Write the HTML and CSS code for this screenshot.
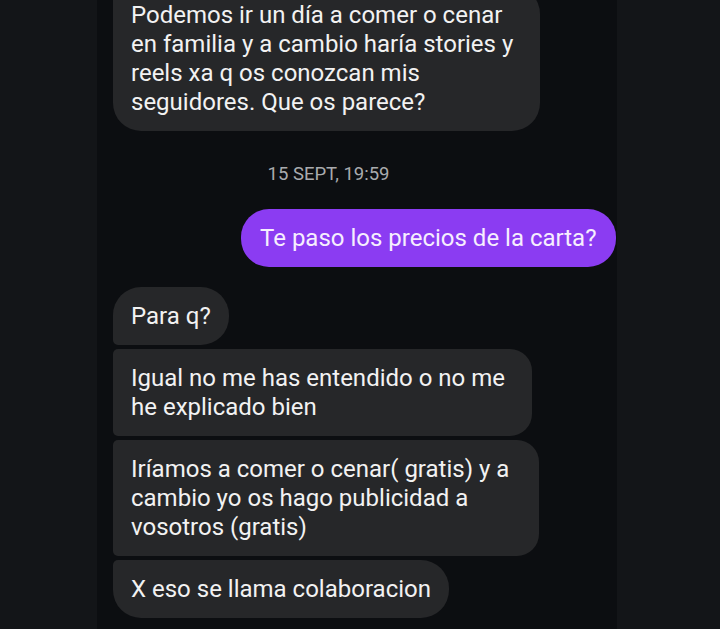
FILE: index.html
```html
<!DOCTYPE html>
<html lang="es">
<head>
<meta charset="utf-8">
<link rel="stylesheet" href="styles.css">
</head>
<body>
<main class="chat">
  <div class="row in top"><div class="bubble gray last multi">Podemos ir un día a comer o cenar<br>en familia y a cambio haría stories y<br>reels xa q os conozcan mis<br>seguidores. Que os parece?</div></div>
  <div class="stamp">15 SEPT, 19:59</div>
  <div class="row out"><div class="bubble purple">Te paso los precios de la carta?</div></div>
  <div class="group">
    <div class="row in"><div class="bubble gray first">Para q?</div></div>
    <div class="row in"><div class="bubble gray mid multi">Igual no me has entendido o no me<br>he explicado bien</div></div>
    <div class="row in"><div class="bubble gray mid multi wide">Iríamos a comer o cenar( gratis) y a<br>cambio yo os hago publicidad a<br>vosotros (gratis)</div></div>
    <div class="row in"><div class="bubble gray last">X eso se llama colaboracion</div></div>
  </div>
</main>
</body>
</html>
```
FILE: styles.css
```css
html, body {
  margin: 0;
  padding: 0;
  height: 100%;
  overflow: hidden;
  background: #131518;
}
.chat {
  margin-left: 97px;
  width: 520px;
  height: 629px;
  background: #0c0e11;
  box-sizing: border-box;
  padding: 0 1px 0 16px;
  font-family: Roboto, "Noto Sans", sans-serif;
  color: #f2f2f2;
  display: flex;
  flex-direction: column;
}
.row {
  display: flex;
}
.row.out {
  justify-content: flex-end;
}
.row.top {
  margin-top: -14px;
}
.bubble {
  font-size: 24px;
  line-height: 29px;
  padding: 14.5px 18px;
  border-radius: 28px;
  white-space: nowrap;
}
.bubble.multi {
  padding-right: 27px;
}
.bubble.multi.wide {
  padding-right: 30px;
}
.gray {
  background: #262729;
}
.purple {
  background: #8b3cf2;
  color: #f6eefe;
  padding-left: 19.5px;
  padding-right: 19.5px;
}
.gray.first { border-bottom-left-radius: 5px; }
.gray.mid { border-top-left-radius: 5px; border-bottom-left-radius: 5px; border-top-right-radius: 22px; border-bottom-right-radius: 22px; }
.gray.last { border-top-left-radius: 5px; }
.stamp {
  margin: 33px 0 0 -72px;
  text-align: center;
  font-size: 18.5px;
  line-height: 20px;
  color: #a9abae;
}
.out {
  margin-top: 25px;
}
.group {
  margin-top: 20px;
  display: flex;
  flex-direction: column;
  gap: 4px;
}
```
